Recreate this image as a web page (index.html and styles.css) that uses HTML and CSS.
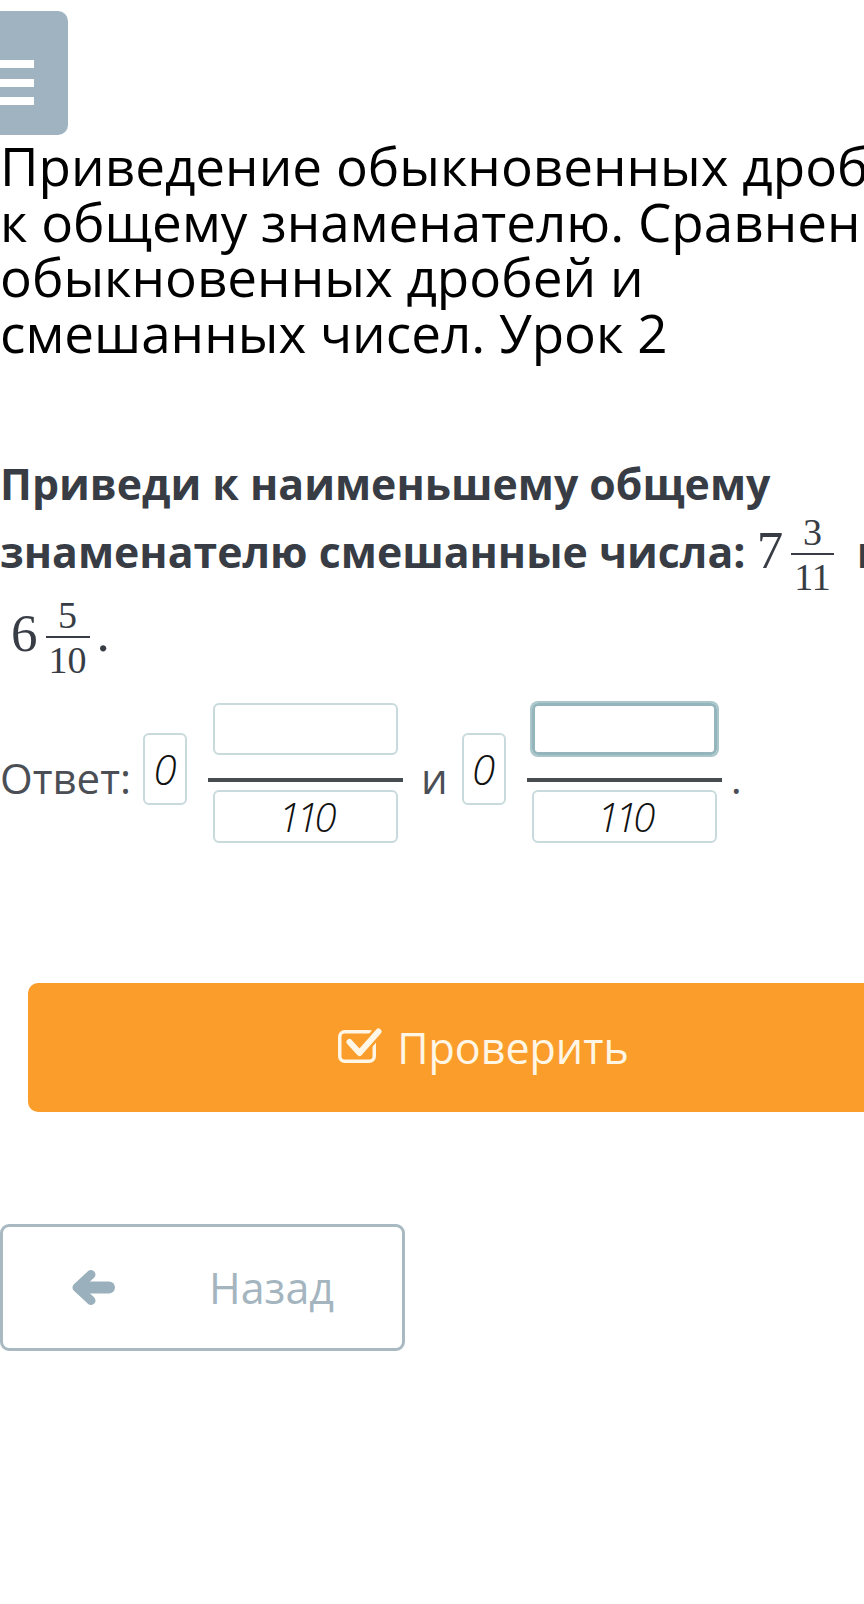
FILE: index.html
```html
<!DOCTYPE html>
<html lang="ru">
<head>
<meta charset="utf-8">
<title>Приведение обыкновенных дробей к общему знаменателю</title>
<link rel="stylesheet" href="styles.css">
</head>
<body>
<div class="page">
  <div class="menu-btn" role="button" aria-label="Меню"><span></span><span></span><span></span></div>
  <h1 class="title">Приведение обыкновенных дробей к общему знаменателю. Сравнение обыкновенных дробей и смешанных чисел. Урок 2</h1>
  <p class="question">Приведи к наименьшему общему знаменателю смешанные числа: <span class="math math-first"><span class="mn">7</span><span class="frac"><span class="num">3</span><span class="bar"></span><span class="den">11</span></span></span> и <span class="math math-lead"><span class="mn">6</span><span class="frac"><span class="num">5</span><span class="bar"></span><span class="den">10</span></span><span class="mn mdot">.</span></span></p>
  <div class="answer">
    <span class="label">Ответ:</span>
    <span class="whole">0</span>
    <span class="afrac">
      <span class="box"></span>
      <span class="line"></span>
      <span class="box box-den">110</span>
    </span>
    <span class="conj">и</span>
    <span class="whole whole-second">0</span>
    <span class="afrac">
      <span class="box box-focus"></span>
      <span class="line"></span>
      <span class="box box-den">110</span>
    </span>
    <span class="dot">.</span>
  </div>
  <button class="check-btn">
    <svg class="check-icon" width="44" height="37" viewBox="0 0 44 37" aria-hidden="true">
      <rect x="1.75" y="4.75" width="34.5" height="29.5" rx="5" fill="none" stroke="currentColor" stroke-width="3.5"/>
      <path d="M11.5 15 L21.5 26 L40.5 4.5" fill="none" stroke="#fa9d2b" stroke-width="11" stroke-linecap="round" stroke-linejoin="round"/>
      <path d="M11.5 15 L21.5 26 L40.5 4.5" fill="none" stroke="currentColor" stroke-width="6" stroke-linecap="round" stroke-linejoin="round"/>
    </svg>
    <span>Проверить</span>
  </button>
  <button class="back-btn">
    <svg class="back-icon" width="43" height="35" viewBox="0 0 43 35" aria-hidden="true">
      <path d="M19 4.5 L5 17.5 L19 30.5" fill="none" stroke="currentColor" stroke-width="9" stroke-linecap="round" stroke-linejoin="round"/>
      <path d="M8 17.5 L37 17.5" fill="none" stroke="currentColor" stroke-width="12" stroke-linecap="round"/>
    </svg>
    <span class="back-text">Назад</span>
  </button>
</div>
</body>
</html>
```
FILE: styles.css
```css
html, body {
  margin: 0;
  padding: 0;
  background: #ffffff;
  overflow: hidden;
}

body {
  font-family: "Open Sans", "Noto Sans", sans-serif;
}

.page {
  width: 945px;
}

.menu-btn {
  display: flex;
  flex-direction: column;
  gap: 10.5px;
  box-sizing: border-box;
  width: 68px;
  height: 124px;
  margin: 11px 0 0 0;
  padding: 49px 0 0 0;
  border-radius: 0 10px 10px 0;
  background: #9fb3c0;
}

.menu-btn span {
  display: block;
  width: 34px;
  height: 8px;
  background: #ffffff;
}

.title {
  margin: 3px 0 0 0;
  font-size: 53px;
  font-weight: 400;
  line-height: 55.5px;
  color: #000000;
}

.question {
  margin: 95px 0 0 0;
  font-size: 42.8px;
  font-weight: 700;
  line-height: 58px;
  color: #383d45;
}

.math {
  white-space: nowrap;
  font-weight: 400;
}

.math-first {
  margin-right: 6px;
}

.math-lead {
  margin-left: 11px;
}

.mn {
  font-family: "Liberation Serif", "Times New Roman", serif;
  font-size: 53px;
  line-height: 1;
}

.mdot {
  margin-left: 1px;
}

.frac {
  display: inline-flex;
  flex-direction: column;
  vertical-align: 23px;
  margin: 0 6px 0 8px;
  font-family: "Liberation Serif", "Times New Roman", serif;
  font-size: 38px;
  line-height: 38px;
}

.num,
.den {
  display: block;
  padding: 0 3px;
  text-align: center;
}

.num {
  margin-bottom: 2px;
}

.bar {
  display: block;
  height: 2px;
  background: #383d45;
}

.den {
  margin-top: 3px;
}

.answer {
  display: flex;
  align-items: flex-start;
  margin-top: 24px;
  font-size: 42px;
  line-height: 56px;
  color: #4b4f55;
}

.label {
  margin-top: 47px;
}

.whole {
  display: flex;
  align-items: center;
  justify-content: center;
  box-sizing: border-box;
  width: 44px;
  height: 72px;
  margin: 30px 0 0 12px;
  border: 2px solid #c9dadd;
  border-radius: 6px;
  font-size: 42px;
  font-style: italic;
  font-weight: 300;
  color: #111111;
}

.whole-second {
  margin-left: 14px;
}

.afrac {
  display: flex;
  flex-direction: column;
  align-items: center;
  width: 195px;
  margin-left: 21px;
}

.box {
  display: flex;
  align-items: center;
  justify-content: center;
  box-sizing: border-box;
  width: 185px;
  height: 52px;
  border: 2px solid #c9dadd;
  border-radius: 6px;
  font-size: 40px;
  font-style: italic;
  font-weight: 300;
  letter-spacing: -4px;
  color: #111111;
}

.box-den {
  height: 53px;
}

.box-focus {
  border-color: #93b5bb;
  border-width: 3px;
  box-shadow: 0 0 0 2px #a9c6cb;
}

.line {
  align-self: stretch;
  height: 4px;
  margin: 23px 0 8px 0;
  background: #474c51;
}

.conj {
  margin: 47px 0 0 18px;
}

.dot {
  margin: 47px 0 0 9px;
}

.check-btn {
  display: flex;
  align-items: center;
  justify-content: center;
  gap: 15px;
  box-sizing: border-box;
  width: 911px;
  height: 129px;
  margin: 140px 0 0 28px;
  padding: 0;
  border: 0;
  border-radius: 10px;
  background: #fa9d2b;
  color: #fff6e5;
  font-family: "Open Sans", "Noto Sans", sans-serif;
  font-size: 43px;
  font-weight: 400;
  line-height: 57px;
}

.check-icon {
  display: block;
  margin-top: -5px;
}

.back-btn {
  display: flex;
  align-items: center;
  box-sizing: border-box;
  width: 405px;
  height: 127px;
  margin: 112px 0 0 0;
  padding: 0 0 0 69px;
  border: 3px solid #a9b9c2;
  border-radius: 9px;
  background: #ffffff;
  color: #9bb0bd;
  font-family: "Open Sans", "Noto Sans", sans-serif;
  font-size: 43px;
  font-weight: 400;
  line-height: 57px;
}

.back-icon {
  display: block;
}

.back-text {
  margin-left: 94px;
  color: #a4b5bf;
}
```
